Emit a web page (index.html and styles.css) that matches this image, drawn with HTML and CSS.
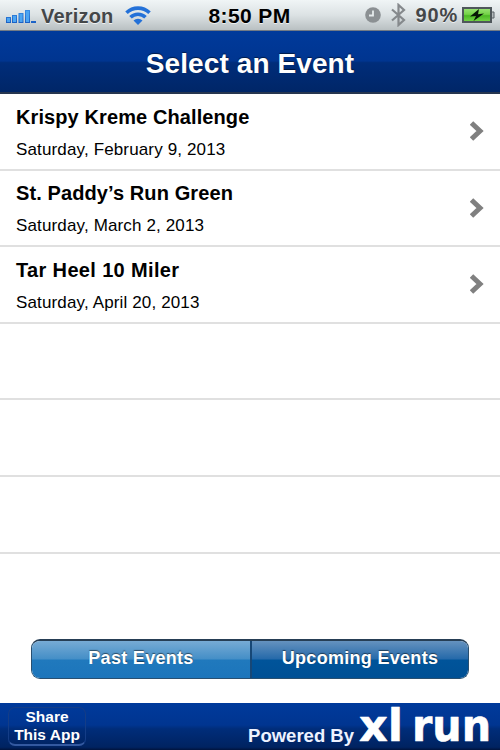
FILE: index.html
```html
<!doctype html>
<html lang="en">
  <head>
    <meta charset="UTF-8" />
    <meta name="viewport" content="width=device-width, initial-scale=1.0" />
    <title>Select an Event</title>
    <link rel="stylesheet" href="styles.css">
  </head>
  <body>
    <div class="status-bar">
      <div class="status-left">
        <svg class="signal" width="31" height="14" viewBox="0 0 31 14">
          <defs>
            <linearGradient id="blue" x1="0" y1="0" x2="0" y2="1">
              <stop offset="0" stop-color="#3b8fe6" />
              <stop offset="1" stop-color="#1a5fc4" />
            </linearGradient>
          </defs>
          <path fill="url(#blue)" d="M0 7h5v6H0zM6 5h5v8H6zM12.500 3h5v10h-5zM19 0h5v13h-5zM25 11h5v2h-5z" />
          <path fill="#4ba5f2" d="M1 8h3v4H1zM7 6h3v6H7zM13.500 4h3v8h-3zM20 1h3v11h-3z" />
        </svg>
        <span class="carrier">Verizon</span>
        <svg class="wifi" width="26" height="19" viewBox="0 0 26 19">
          <g fill="none" stroke="#2371d8" stroke-width="3.600">
            <path d="M1.500 6.800a16.500 16.500 0 0 1 23 0" />
            <path d="M5.500 11.300a10.700 10.700 0 0 1 15 0" />
          </g>
          <path fill="#2371d8" d="M8.500 14.500a6.400 6.400 0 0 1 9 0L13 19z" />
        </svg>
      </div>
      <span class="time">8:50 PM</span>
      <div class="status-right">
        <svg width="16" height="16" viewBox="0 0 16 16">
          <circle cx="8" cy="8" r="7.800" fill="#8b9093" />
          <path d="M8 3.500V8.500H4" fill="none" stroke="#e5eaec" stroke-width="1.800" />
        </svg>
        <svg class="bluetooth" width="15" height="24" viewBox="0 0 15 24">
          <path d="M1 6.500L13 17L7.500 22V2L13 7L1 17.500" fill="none" stroke="#85898c" stroke-width="2.200" />
        </svg>
        <span class="percent">90%</span>
        <svg class="battery" width="33" height="17" viewBox="0 0 33 17">
          <defs>
            <linearGradient id="charge" x1="0" y1="0" x2="0" y2="1">
              <stop offset="0" stop-color="#9be477" />
              <stop offset=".45" stop-color="#75d348" />
              <stop offset=".55" stop-color="#4cb925" />
              <stop offset="1" stop-color="#78d74a" />
            </linearGradient>
          </defs>
          <rect x="1" y="1" width="28" height="14" fill="url(#charge)" stroke="#4f575b" stroke-width="2" />
          <path d="M30 5h2v6h-2" fill="#b6bcbf" stroke="#596165" />
          <path d="M17 2L8 9.500L14 9L11.500 14L22 6.500L16 7.200z" fill="#071606" />
        </svg>
      </div>
    </div>

    <header class="nav-bar">
      <h1>Select an Event</h1>
    </header>

    <main>
      <ul class="event-list">
        <li class="event">
          <div>
            <h2>Krispy Kreme Challenge</h2>
            <p>Saturday, February 9, 2013</p>
          </div>
          <svg class="chevron" width="14" height="20" viewBox="0 0 14 20"><path d="M1.500 2L10 10L1.500 18" /></svg>
        </li>
        <li class="event">
          <div>
            <h2>St. Paddy’s Run Green</h2>
            <p>Saturday, March 2, 2013</p>
          </div>
          <svg class="chevron" width="14" height="20" viewBox="0 0 14 20"><path d="M1.500 2L10 10L1.500 18" /></svg>
        </li>
        <li class="event">
          <div>
            <h2 class="wide">Tar Heel 10 Miler</h2>
            <p>Saturday, April 20, 2013</p>
          </div>
          <svg class="chevron" width="14" height="20" viewBox="0 0 14 20"><path d="M1.500 2L10 10L1.500 18" /></svg>
        </li>
        <li class="event"></li>
        <li class="event"></li>
        <li class="event"></li>
      </ul>
      <div class="segments">
        <button class="segment">Past Events</button>
        <button class="segment selected">Upcoming Events</button>
      </div>
    </main>

    <footer class="toolbar">
      <button class="share">Share<br>This App</button>
      <div class="powered">
        <span>Powered By</span>
        <svg class="brand" width="130" height="43" viewBox="0 0 130 43">
          <text x="0" y="34" textLength="44" lengthAdjust="spacingAndGlyphs">xl</text>
          <text x="53" y="34" textLength="79" lengthAdjust="spacingAndGlyphs">run</text>
        </svg>
      </div>
    </footer>
  </body>
</html>
```

FILE: styles.css
```css
* {
  box-sizing: border-box;
}

body {
  margin: 0;
  width: 500px;
  height: 750px;
  display: flex;
  flex-direction: column;
  background: #fff;
  color: #000;
  font-family: "Liberation Sans", Arial, sans-serif;
}

h1,
h2,
p,
ul {
  margin: 0;
  padding: 0;
}

svg {
  display: block;
  flex: none;
}

button {
  padding: 0;
  color: #fff;
  font: bold 18px "Liberation Sans", Arial, sans-serif;
}

.status-bar {
  flex: none;
  height: 31px;
  display: grid;
  grid-template-columns: 1fr auto 1fr;
  align-items: center;
  padding: 0 5px 0 6px;
  background: linear-gradient(#f0f5f6, #dce2e4 50%, #b9c0c2);
  border-bottom: 1px solid #737b85;
  font-size: 21px;
  font-weight: bold;
  text-shadow: 0 1px 0 rgba(255, 255, 255, 0.7);
}

.status-left,
.status-right {
  display: flex;
  align-items: center;
  color: #444749;
}

.status-right {
  justify-content: flex-end;
}

.time {
  margin: 1px 2px 0 0;
  letter-spacing: 0.4px;
}

.signal {
  margin-top: 3px;
}

.carrier {
  margin: 2px 0 0 4px;
  font-size: 20px;
  letter-spacing: 0.2px;
}

.wifi {
  margin-left: 11px;
}

.bluetooth {
  margin-left: 10px;
}

.percent {
  margin: 1px 0 0 10px;
  font-size: 20px;
  letter-spacing: 0.8px;
}

.battery {
  margin-left: 4px;
}

.nav-bar {
  flex: none;
  height: 63px;
  display: flex;
  align-items: center;
  justify-content: center;
  background: linear-gradient(#003a9b, #003590 49%, #002d7a 52%, #002667);
  border-bottom: 2px solid #26364f;
}

h1 {
  margin-top: 5px;
  color: #fff;
  font-size: 28px;
  letter-spacing: 0.1px;
  text-shadow: 0 -1px 1px rgba(0, 0, 0, 0.5);
}

main {
  flex: 1;
}

.event-list {
  list-style: none;
}

.event {
  height: 76.6px;
  display: flex;
  align-items: center;
  justify-content: space-between;
  padding: 0 16px 0 16px;
  border-bottom: 2px solid #e0e0e0;
}

h2 {
  margin-top: 3px;
  font-size: 20px;
  line-height: 24px;
  letter-spacing: 0.1px;
}

.wide {
  letter-spacing: 0.35px;
}

.event p {
  margin-top: 10px;
  font-size: 17px;
  line-height: 22px;
  letter-spacing: 0.14px;
}

.chevron {
  fill: none;
  stroke: #808080;
  stroke-width: 5;
}

.segments {
  display: flex;
  width: 438px;
  height: 40px;
  margin: 85px auto 0 31px;
  overflow: hidden;
  border: 1px solid #294f70;
  border-top: 2px solid #263e55;
  border-radius: 9px;
}

.segment {
  width: 218px;
  padding-bottom: 2px;
  border: 0;
  background: linear-gradient(#77abd5, #458fc7 48%, #2079bd 52%, #1c75bb);
  letter-spacing: 0.3px;
  text-shadow: 0 -1px 1px rgba(0, 0, 0, 0.5);
}

.selected {
  border-left: 2px solid #174776;
  background: linear-gradient(#6592bf, #266aaa 48%, #00549a 52%, #005095);
}

.toolbar {
  flex: none;
  height: 47px;
  display: flex;
  justify-content: space-between;
  padding: 4px 11px 0 8px;
  background: linear-gradient(#003a9b, #003590 47%, #002d7a 55%, #002361 94%, #00133d);
}

.share {
  width: 78px;
  height: 39px;
  border: 1px solid #143d87;
  border-bottom: 2px solid #3359a0;
  border-radius: 7px;
  background: transparent;
  font-size: 15.5px;
  line-height: 18px;
}

.powered {
  display: flex;
  color: #fff;
  font-size: 18.5px;
  font-weight: bold;
}

.powered span {
  margin: 18px 5px 0 0;
  color: #edf2ff;
}

.brand {
  overflow: visible;
  fill: #fff;
  stroke: #fff;
  stroke-width: 0.6;
  stroke-linejoin: round;
  font: bold 45px "DejaVu Sans", sans-serif;
}
```
